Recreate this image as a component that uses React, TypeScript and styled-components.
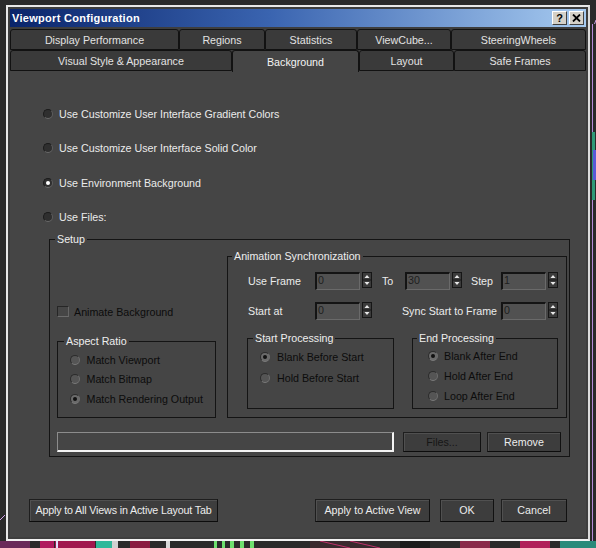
import React from 'react';
import styled, { createGlobalStyle } from 'styled-components';

const GlobalStyle = createGlobalStyle`
  html, body {
    margin: 0;
    padding: 0;
    background: #2a2a2a;
  }
  body {
    font-family: "Liberation Sans", Arial, sans-serif;
    font-size: 10.7px;
    line-height: 14px;
    color: #ebebeb;
  }
  * {
    box-sizing: border-box;
  }
`;

const Stage = styled.div`
  position: relative;
  width: 596px;
  height: 548px;
  overflow: hidden;
  padding: 5px 0 0 6px;
`;

const Backdrop = styled.svg`
  position: absolute;
  left: 0;
  top: 0;
`;

const Window = styled.div`
  position: relative;
  display: flex;
  flex-direction: column;
  width: 584px;
  height: 536px;
  border: 2px solid;
  border-color: #e8e8e8 #dcdcdc #f2f2f2 #e8e8e8;
  padding: 2px;
  background: #3e3e3e;
`;

const TitleBar = styled.div`
  display: flex;
  align-items: center;
  height: 18px;
  padding: 0 2px 0 2px;
  background: linear-gradient(90deg, #0a246a 0%, #3a64b0 45%, #a6caf0 100%);
`;

const TitleText = styled.span`
  flex: 1;
  color: #fff;
  font-weight: bold;
  font-size: 11px;
  letter-spacing: 0.3px;
`;

const CaptionButton = styled.span`
  display: flex;
  align-items: center;
  justify-content: center;
  width: 15px;
  height: 14px;
  margin-left: 2px;
  background: #d4d0c8;
  border: 1px solid;
  border-color: #fff #404040 #404040 #fff;
  color: #000;
  font-weight: bold;
  font-size: 11px;
  line-height: 12px;
`;

const TabStrip = styled.div`
  display: flex;
  flex-direction: column;
  margin-top: 2px;
`;

const TabRow = styled.div`
  display: flex;
  height: 21px;
`;

const Tab = styled.div<{ $w: number; $active?: boolean }>`
  display: flex;
  align-items: center;
  justify-content: center;
  width: ${(p) => p.$w}px;
  height: ${(p) => (p.$active ? 22 : 21)}px;
  border: 1px solid #121212;
  border-bottom: ${(p) => (p.$active ? 'none' : '1px solid #121212')};
  border-radius: 3px 3px 0 0;
  background: ${(p) => (p.$active ? '#454545' : '#3a3a3a')};
  color: ${(p) => (p.$active ? '#f4f4f4' : '#e2e2e2')};
  white-space: nowrap;
  position: relative;
  z-index: ${(p) => (p.$active ? 1 : 0)};
`;

const Panel = styled.div`
  flex: 1;
  display: flex;
  flex-direction: column;
  background: #454545;
  padding-top: 36px;
`;

const RadioList = styled.div`
  display: flex;
  flex-direction: column;
  gap: 20.3px;
  padding-left: 33px;
`;

const Option = styled.label<{ $gap?: number }>`
  display: flex;
  align-items: center;
  height: 14px;
  gap: ${(p) => p.$gap ?? 6}px;
  white-space: nowrap;
`;

const Radio = styled.span<{ $checked?: boolean; $disabled?: boolean }>`
  display: flex;
  flex: none;
  align-items: center;
  justify-content: center;
  width: 10px;
  height: 10px;
  border-radius: 50%;
  border: 1px solid;
  border-color: ${(p) =>
    p.$disabled ? '#2c2c2c #6e6e6e #7a7a7a #2c2c2c' : '#1c1c1c #5e5e5e #6a6a6a #1c1c1c'};
  background: ${(p) =>
    p.$disabled ? (p.$checked ? '#6a6a6a' : '#555') : '#2f2f2f'};

  &::after {
    content: '';
    display: ${(p) => (p.$checked ? 'block' : 'none')};
    width: 4px;
    height: 4px;
    border-radius: 50%;
    background: ${(p) => (p.$disabled ? '#111' : '#fff')};
  }
`;

const CheckBox = styled.span`
  flex: none;
  width: 12px;
  height: 11px;
  border: 1px solid;
  border-color: #262626 #666 #6c6c6c #262626;
  background: #464646;
`;

const Text = styled.span<{ $disabled?: boolean }>`
  color: ${(p) => (p.$disabled ? '#0c0c0c' : '#ebebeb')};
`;

const Group = styled.fieldset<{ $w: number }>`
  margin: 0;
  width: ${(p) => p.$w}px;
  min-width: 0;
  border: 1px solid #141414;
  padding: 0;
`;

const GroupLabel = styled.legend<{ $ml: number }>`
  margin-left: ${(p) => p.$ml}px;
  padding: 0 2px;
  font-size: 10.7px;
  line-height: 13px;
  color: #eeeeee;
`;

const GroupBody = styled.div<{ $pad: string }>`
  padding: ${(p) => p.$pad};
`;

const SetupGroup = styled(Group)`
  margin: 9.5px 0 0 39px;
`;

const SetupBody = styled.div`
  display: flex;
  flex-direction: column;
  padding: 4px 2px 4px 7px;
`;

const SetupTop = styled.div`
  display: grid;
  grid-template-columns: 159px 340px;
  column-gap: 11px;
`;

const LeftColumn = styled.div`
  display: flex;
  flex-direction: column;
  padding-top: 54.5px;
`;

const AspectGroup = styled(Group)`
  margin-top: 16.5px;
`;

const OptionStack = styled.div<{ $gap: number }>`
  display: flex;
  flex-direction: column;
  gap: ${(p) => p.$gap}px;
`;

const SyncGrid = styled.div`
  display: grid;
  grid-template-columns: 68px 66px 24px 65px 31px 57px;
  grid-auto-rows: 18px;
  row-gap: 12px;
  align-items: center;
`;

const FieldLabel = styled.span<{ $span?: string; $end?: boolean }>`
  grid-column: ${(p) => p.$span ?? 'auto'};
  justify-self: ${(p) => (p.$end ? 'end' : 'start')};
  padding-left: 1px;
  padding-right: ${(p) => (p.$end ? 4 : 0)}px;
  white-space: nowrap;
`;

const SpinnerWrap = styled.div`
  display: flex;
  align-items: flex-start;
  gap: 2px;
  height: 18px;
`;

const SpinnerField = styled.div`
  width: 45px;
  height: 18px;
  border-style: solid;
  border-width: 2px 1px 1px 2px;
  border-color: #141414 #6a6a6a #6a6a6a #141414;
  background: #515151;
  color: #1e1e1e;
  padding-left: 1px;
  line-height: 13px;
`;

const SpinnerArrows = styled.svg`
  flex: none;
`;

const ProcessRow = styled.div`
  display: flex;
  gap: 18px;
  margin-top: 12.5px;
`;

const FileRow = styled.div`
  display: flex;
  align-items: center;
  margin-top: 14px;
  height: 20px;
`;

const PathField = styled.div`
  width: 337px;
  height: 20px;
  border-style: solid;
  border-width: 1px 2px 2px 1px;
  border-color: #8c8c8c #f4f4f4 #f4f4f4 #8c8c8c;
  background: #454545;
`;

const Button = styled.button<{ $w: number; $disabled?: boolean }>`
  flex: none;
  width: ${(p) => p.$w}px;
  height: 100%;
  padding: 0;
  font-family: "Liberation Sans", Arial, sans-serif;
  font-size: 10.7px;
  white-space: nowrap;
  color: ${(p) => (p.$disabled ? '#161616' : '#ececec')};
  background: #3d3d3d;
  border: 1px solid;
  border-color: #1e1e1e #111 #0c0c0c #1e1e1e;
  box-shadow: inset 1px 1px 0 #505050;
`;

const WideButton = styled(Button)`
  letter-spacing: -0.15px;
`;

const SmallButton = styled(Button)`
  height: 20px;
  margin-left: ${(p) => (p.$disabled ? 9 : 6)}px;
`;

const ButtonBar = styled.div`
  display: flex;
  height: 23px;
  margin-top: 42px;
  padding-left: 19px;
`;

const Spacer = styled.div<{ $w: number }>`
  width: ${(p) => p.$w}px;
  flex: none;
`;

const Spinner = ({ value }: { value: string }) => (
  <SpinnerWrap>
    <SpinnerField>{value}</SpinnerField>
    <SpinnerArrows width="10" height="16" viewBox="0 0 10 16">
      <rect x="0.5" y="0.5" width="9" height="15" fill="#3b3b3b" stroke="#161616" />
      <line x1="1" y1="8" x2="9" y2="8" stroke="#161616" />
      <path d="M2.5 6 L5 3 L7.5 6 Z" fill="#e8e8e8" />
      <path d="M2.5 10 L7.5 10 L5 13 Z" fill="#e8e8e8" />
    </SpinnerArrows>
  </SpinnerWrap>
);

const row1 = [
  { label: 'Display Performance', w: 169 },
  { label: 'Regions', w: 86 },
  { label: 'Statistics', w: 92 },
  { label: 'ViewCube...', w: 94 },
  { label: 'SteeringWheels', w: 135 },
];

const row2 = [
  { label: 'Visual Style & Appearance', w: 222 },
  { label: 'Background', w: 127, active: true },
  { label: 'Layout', w: 95 },
  { label: 'Safe Frames', w: 132 },
];

const bgOptions = [
  { label: 'Use Customize User Interface Gradient Colors' },
  { label: 'Use Customize User Interface Solid Color' },
  { label: 'Use Environment Background', checked: true },
  { label: 'Use Files:' },
];

const App = () => {
  return (
    <>
      <GlobalStyle />
      <Stage>
        <Backdrop width="596" height="548" viewBox="0 0 596 548">
          <rect width="596" height="548" fill="#2a2a2a" />
          <line x1="592.5" y1="24" x2="592.5" y2="548" stroke="#b58ad8" />
          <line x1="594.5" y1="24" x2="596" y2="20" stroke="#c8a0e8" />
          <rect x="592" y="132" width="3" height="68" fill="#2f9a78" />
          <rect x="593" y="150" width="3" height="30" fill="#5a5ad8" />
          <line x1="0" y1="520" x2="5" y2="515" stroke="#d0a0e8" />
          <rect x="0" y="541" width="30" height="7" fill="#6a2a5a" />
          <rect x="40" y="541" width="14" height="7" fill="#b01a5e" />
          <rect x="55" y="541" width="40" height="7" fill="#a0184e" />
          <rect x="56" y="541" width="2" height="7" fill="#e0e0ff" />
          <rect x="96" y="541" width="16" height="7" fill="#30b89a" />
          <rect x="112" y="541" width="6" height="7" fill="#d0d0d0" />
          <rect x="130" y="541" width="20" height="7" fill="#8a1a40" />
          <rect x="166" y="541" width="4" height="7" fill="#d8d8d8" />
          <rect x="214" y="541" width="3" height="7" fill="#6ee06e" />
          <rect x="222" y="541" width="3" height="7" fill="#6ee06e" />
          <rect x="230" y="541" width="4" height="7" fill="#6ee06e" />
          <rect x="240" y="541" width="4" height="7" fill="#6ee06e" />
          <rect x="250" y="541" width="4" height="7" fill="#6ee06e" />
          <rect x="310" y="541" width="60" height="7" fill="#3a2a2e" />
          <line x1="320" y1="541" x2="350" y2="548" stroke="#c0306a" />
          <line x1="350" y1="541" x2="380" y2="548" stroke="#c0306a" />
          <rect x="400" y="541" width="30" height="7" fill="#1c1c1c" />
          <rect x="460" y="541" width="30" height="7" fill="#8a2a4a" />
          <rect x="520" y="541" width="30" height="7" fill="#b0205a" />
          <rect x="560" y="541" width="36" height="7" fill="#2a8a7a" />
        </Backdrop>

        <Window>
          <TitleBar>
            <TitleText>Viewport Configuration</TitleText>
            <CaptionButton>?</CaptionButton>
            <CaptionButton>
              <svg width="9" height="8" viewBox="0 0 9 8">
                <path d="M1 0.5 L8 7.5 M8 0.5 L1 7.5" stroke="#000" strokeWidth="1.8" />
              </svg>
            </CaptionButton>
          </TitleBar>

          <TabStrip>
            <TabRow>
              {row1.map((t) => (
                <Tab key={t.label} $w={t.w}>
                  {t.label}
                </Tab>
              ))}
            </TabRow>
            <TabRow>
              {row2.map((t) => (
                <Tab key={t.label} $w={t.w} $active={t.active}>
                  {t.label}
                </Tab>
              ))}
            </TabRow>
          </TabStrip>

          <Panel>
            <RadioList>
              {bgOptions.map((o) => (
                <Option key={o.label}>
                  <Radio $checked={o.checked} />
                  <Text>{o.label}</Text>
                </Option>
              ))}
            </RadioList>

            <SetupGroup $w={521}>
              <GroupLabel $ml={5}>Setup</GroupLabel>
              <SetupBody>
                <SetupTop>
                  <LeftColumn>
                    <Option $gap={5}>
                      <CheckBox />
                      <Text $disabled>Animate Background</Text>
                    </Option>
                    <AspectGroup $w={159}>
                      <GroupLabel $ml={6}>Aspect Ratio</GroupLabel>
                      <GroupBody $pad="4.5px 0 11px 12px">
                        <OptionStack $gap={5.5}>
                          <Option $gap={6.5}>
                            <Radio $disabled />
                            <Text $disabled>Match Viewport</Text>
                          </Option>
                          <Option $gap={6.5}>
                            <Radio $disabled />
                            <Text $disabled>Match Bitmap</Text>
                          </Option>
                          <Option $gap={6.5}>
                            <Radio $disabled $checked />
                            <Text $disabled>Match Rendering Output</Text>
                          </Option>
                        </OptionStack>
                      </GroupBody>
                    </AspectGroup>
                  </LeftColumn>

                  <Group $w={340}>
                    <GroupLabel $ml={4}>Animation Synchronization</GroupLabel>
                    <GroupBody $pad="8.5px 0 5px 19px">
                      <SyncGrid>
                        <FieldLabel>Use Frame</FieldLabel>
                        <Spinner value="0" />
                        <FieldLabel>To</FieldLabel>
                        <Spinner value="30" />
                        <FieldLabel>Step</FieldLabel>
                        <Spinner value="1" />

                        <FieldLabel>Start at</FieldLabel>
                        <Spinner value="0" />
                        <FieldLabel $span="3 / 6" $end>
                          Sync Start to Frame
                        </FieldLabel>
                        <Spinner value="0" />
                      </SyncGrid>

                      <ProcessRow>
                        <Group $w={147}>
                          <GroupLabel $ml={5}>Start Processing</GroupLabel>
                          <GroupBody $pad="4.5px 0 18px 12px">
                            <OptionStack $gap={7}>
                              <Option $gap={7}>
                                <Radio $disabled $checked />
                                <Text $disabled>Blank Before Start</Text>
                              </Option>
                              <Option $gap={7}>
                                <Radio $disabled />
                                <Text $disabled>Hold Before Start</Text>
                              </Option>
                            </OptionStack>
                          </GroupBody>
                        </Group>
                        <Group $w={146}>
                          <GroupLabel $ml={4}>End Processing</GroupLabel>
                          <GroupBody $pad="3.5px 0 5px 15px">
                            <OptionStack $gap={6}>
                              <Option>
                                <Radio $disabled $checked />
                                <Text $disabled>Blank After End</Text>
                              </Option>
                              <Option>
                                <Radio $disabled />
                                <Text $disabled>Hold After End</Text>
                              </Option>
                              <Option>
                                <Radio $disabled />
                                <Text $disabled>Loop After End</Text>
                              </Option>
                            </OptionStack>
                          </GroupBody>
                        </Group>
                      </ProcessRow>
                    </GroupBody>
                  </Group>
                </SetupTop>

                <FileRow>
                  <PathField />
                  <SmallButton $w={78} $disabled>
                    Files...
                  </SmallButton>
                  <SmallButton $w={74}>Remove</SmallButton>
                </FileRow>
              </SetupBody>
            </SetupGroup>

            <ButtonBar>
              <WideButton $w={189}>Apply to All Views in Active Layout Tab</WideButton>
              <Spacer $w={97} />
              <Button $w={115}>Apply to Active View</Button>
              <Spacer $w={10} />
              <Button $w={54}>OK</Button>
              <Spacer $w={7} />
              <Button $w={66}>Cancel</Button>
            </ButtonBar>
          </Panel>
        </Window>
      </Stage>
    </>
  );
};

export default App;
